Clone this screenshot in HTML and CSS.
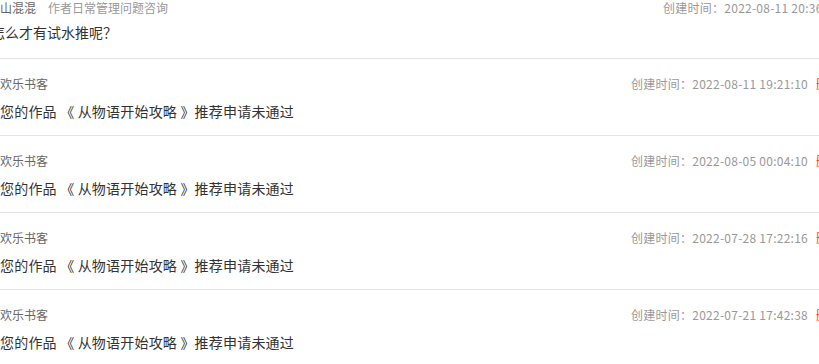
FILE: index.html
```html
<!DOCTYPE html>
<html lang="zh-CN">
<head>
<meta charset="utf-8">
<link rel="stylesheet" href="styles.css">
</head>
<body>
<div class="page">
  <div class="topic">
    <div class="meta">
      <div class="who"><span class="author">山混混</span><span class="cat">作者日常管理问题咨询</span></div>
      <span class="time">创建时间：2022-08-11 20:36:52</span>
    </div>
    <div class="title">怎么才有试水推呢？</div>
  </div>
  <ul class="list">
    <li class="item">
      <div class="meta"><span class="name">欢乐书客</span><span class="right"><span class="time">创建时间：2022-08-11 19:21:10</span><a class="del">删除</a></span></div>
      <div class="msg">您的作品 《 从物语开始攻略 》推荐申请未通过</div>
    </li>
    <li class="item">
      <div class="meta"><span class="name">欢乐书客</span><span class="right"><span class="time">创建时间：2022-08-05 00:04:10</span><a class="del">删除</a></span></div>
      <div class="msg">您的作品 《 从物语开始攻略 》推荐申请未通过</div>
    </li>
    <li class="item">
      <div class="meta"><span class="name">欢乐书客</span><span class="right"><span class="time">创建时间：2022-07-28 17:22:16</span><a class="del">删除</a></span></div>
      <div class="msg">您的作品 《 从物语开始攻略 》推荐申请未通过</div>
    </li>
    <li class="item">
      <div class="meta"><span class="name">欢乐书客</span><span class="right"><span class="time">创建时间：2022-07-21 17:42:38</span><a class="del">删除</a></span></div>
      <div class="msg">您的作品 《 从物语开始攻略 》推荐申请未通过</div>
    </li>
  </ul>
</div>
</body>
</html>
```
FILE: styles.css
```css
html, body {
  margin: 0;
  padding: 0;
  background: #fff;
  overflow: hidden;
}
body {
  font-family: "Noto Sans CJK SC", "Liberation Sans", sans-serif;
  width: 819px;
  height: 364px;
}
.page {
  width: 840px;
}
.meta {
  display: flex;
  justify-content: space-between;
  align-items: center;
  font-size: 12px;
  line-height: 16px;
}
.topic {
  padding-bottom: 16px;
}
.who .author {
  color: #666;
  margin-right: 12px;
}
.who .cat {
  color: #999;
}
.time {
  color: #999;
  letter-spacing: 0.25px;
}
.title {
  margin-top: 6px;
  margin-left: -9px;
  font-size: 14px;
  line-height: 20px;
  color: #333;
}
.list {
  list-style: none;
  margin: 0;
  padding: 0;
}
.item {
  border-top: 1px solid #e3e3e3;
  padding: 17px 0 14px;
}
.name {
  color: #666;
}
.right {
  display: flex;
  gap: 8px;
}
.del {
  color: #f5333f;
}
.msg {
  margin-top: 9px;
  font-size: 14px;
  line-height: 20px;
  color: #333;
  letter-spacing: 0.2px;
}
```
